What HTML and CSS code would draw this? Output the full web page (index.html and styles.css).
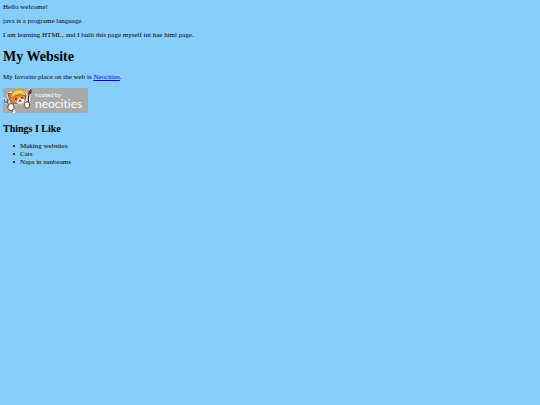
FILE: index.html
```html
<!DOCTYPE html>
<html lang="en">

<head>
    <meta charset="UTF-8" />
    <meta name="viewport" content="width=device-width, initial-scale=1.0" />
    <title>My Website</title>
    <link rel="stylesheet" href="styles.css">
</head>

<body>
    <p>Hello welcome!</p>
    <p>java is a programe language</p>
    <p>I am learning HTML, and I built this page myself int hae html page.</p>

    <h1>My Website</h1>

    <p>My favorite place on the web is <a href="https://neocities.org">Neocities</a>.</p>

    <a class="badge" href="https://neocities.org">
        <svg viewBox="0 0 85 25" role="img" aria-label="Hosted by Neocities">
            <rect width="85" height="25" rx="2" fill="#a9a9a9" />
            <!-- white sticker edge -->
            <path d="M5 5 L9 4 L13 1 L18 1 L22 4 L24 7 L23 13 L19 16 L12 17 L7 14 L5 10 Z" fill="#fff" stroke="#fff" stroke-width="1" stroke-linejoin="round" />
            <path d="M1 11 L3 14 L6 16 L11 24 M27 2 L26 10 L24 17" fill="none" stroke="#fff" stroke-width="2.6" stroke-linecap="round" />
            <!-- cat head -->
            <path d="M5 5 L9 6 L21 5 L23 8 L22 13 L18 16 L12 16 L8 14 L6 10 Z" fill="#ee8a2c" stroke="#3d2619" stroke-width="0.7" stroke-linejoin="round" />
            <path d="M16 10 L18 10 L22 12 Q20 16 16 16 Q13 15 14 13 Z" fill="#fff" />
            <ellipse cx="13" cy="11" rx="0.9" ry="1.1" fill="#26221f" />
            <ellipse cx="19" cy="10" rx="0.8" ry="1.1" fill="#26221f" />
            <path d="M16 12 H18 L17 13.2 L15.5 14 M17 13 L19 13.4" fill="#713527" stroke="#502b21" stroke-width="0.6" />
            <!-- helmet -->
            <path d="M8 7 Q9 2 14 1 Q20 0 22 5 L23 8 Q17 5 12 8 L7 10 Z" fill="#f0bd43" stroke="#765326" stroke-width="0.6" />
            <path d="M10 6 Q14 3 20 4" fill="none" stroke="#ffe07c" stroke-width="0.9" />
            <!-- wrench and brush -->
            <path d="M1 11 L2 14 L4 14 L10 24 M4 14 L5 11" fill="none" stroke="#59646d" stroke-width="1.4" />
            <path d="M26 6 L25 15" stroke="#34302e" stroke-width="1.3" />
            <path d="M28 1 Q29 4 27.5 6 L25.5 6 Q25 3 28 1 Z" fill="#9b2736" stroke="#4b2427" stroke-width="0.6" />
            <!-- paws -->
            <ellipse cx="8" cy="19" rx="3.2" ry="3.5" fill="#fff" stroke="#3d2d24" stroke-width="0.9" />
            <ellipse cx="24" cy="17" rx="2.7" ry="3.2" fill="#fff" stroke="#3d2d24" stroke-width="0.9" />
            <path d="M5.5 18 V21 M22 17 V19" stroke="#e99a48" stroke-width="1.1" />
            <text class="badge-small" x="32" y="9">hosted by</text>
            <text class="badge-name" x="32" y="20">neocities</text>
        </svg>
    </a>

    <h2>Things I Like</h2>

    <ul>
        <li>Making websites</li>
        <li>Cats</li>
        <li>Naps in sunbeams</li>
    </ul>
</body>

</html>
```
FILE: styles.css
```css
body {
    margin: 3px;
    background: #87cefa;
    color: #000;
    font-family: "Liberation Serif", "Times New Roman", serif;
    font-size: 7px;
    line-height: 8px;
}

p {
    margin: 0 0 6px;
}

h1 {
    margin: 10px 0 9px;
    font-size: 14px;
    line-height: 15px;
}

h2 {
    margin: 10px 0 7px;
    font-size: 10px;
    line-height: 12px;
}

a {
    color: #0000ee;
}

.badge {
    display: block;
    width: 85px;
    margin-top: 7px;
}

.badge svg {
    display: block;
}

.badge text {
    fill: #fff;
    font-variant-ligatures: none;
}

.badge-small {
    font-family: Roboto, sans-serif;
    font-size: 6px;
}

.badge-name {
    font-family: Lato, sans-serif;
    font-size: 12px;
}

ul {
    margin: 0;
    padding-left: 10px;
    list-style: none;
}

li {
    display: flex;
    align-items: center;
    gap: 5px;
}

li::before {
    content: "";
    width: 2px;
    height: 2px;
    border-radius: 50%;
    background: #000;
}
```
